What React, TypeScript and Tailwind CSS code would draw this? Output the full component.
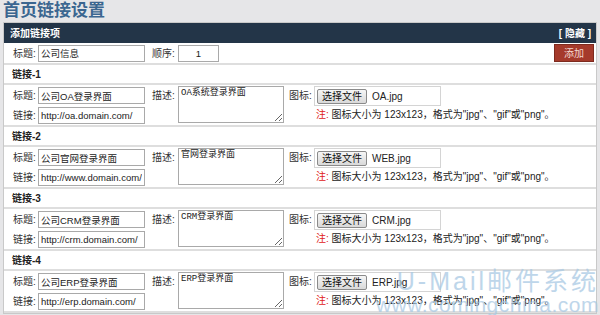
import React from 'react';

const links = [
    {n: 1, title: '公司OA登录界面', url: 'http://oa.domain.com/', desc: 'OA系统登录界面', file: 'OA.jpg'},
    {n: 2, title: '公司官网登录界面', url: 'http://www.domain.com/', desc: '官网登录界面', file: 'WEB.jpg'},
    {n: 3, title: '公司CRM登录界面', url: 'http://crm.domain.com/', desc: 'CRM登录界面', file: 'CRM.jpg'},
    {n: 4, title: '公司ERP登录界面', url: 'http://erp.domain.com/', desc: 'ERP登录界面', file: 'ERP.jpg'},
];

const cjk = "font-['Liberation_Sans','Noto_Sans_CJK_SC',sans-serif]";
const inputCls = 'h-[17px] border border-[#a9a9a9] bg-white px-[2px] text-[9.5px] text-[#222] outline-none';

function Field({label, value, width}: {label: string; value: string; width: string}) {
    return (
        <div className="flex items-center">
            <span className="w-[25px] text-[10px] text-[#333]">{label}</span>
            <input readOnly defaultValue={value} className={`${inputCls} ${width}`} />
        </div>
    );
}

function LinkBlock({link}: {link: typeof links[number]}) {
    return (
        <div>
            <div className="h-[20px] flex items-center pl-[8px] text-[10px] font-bold text-[#222] border-b-2 border-[#dedede]">
                链接-{link.n}
            </div>
            <div className="h-[42px] flex pl-[9px] border-b-2 border-[#dedede]">
                <div className="flex flex-col gap-[3px] pt-[2px] w-[139px]">
                    <Field label="标题:" value={link.title} width="w-[107px]" />
                    <Field label="链接:" value={link.url} width="w-[107px]" />
                </div>
                <div className="flex pt-[1px] w-[137px]">
                    <span className="w-[26px] pt-[2px] text-[10px] text-[#333]">描述:</span>
                    <textarea
                        readOnly
                        defaultValue={link.desc}
                        className="w-[106px] h-[37px] border border-[#a9a9a9] px-[2px] py-0 text-[9px] leading-[12px] text-[#222] outline-none font-['Liberation_Mono','Noto_Sans_CJK_SC',monospace]"
                    />
                </div>
                <div className="flex pt-[1px]">
                    <span className="w-[25px] pt-[2px] text-[10px] text-[#333]">图标:</span>
                    <div className="flex flex-col">
                        <div className="w-[127px] h-[20px] border border-[#d4d4d4] flex items-center pl-[2px] gap-[5px]">
                            <span className="h-[15px] w-[50px] flex items-center justify-center rounded-[2px] border border-[#8a8a8a] bg-gradient-to-b from-[#f6f6f6] to-[#d9d9d9] text-[10px] text-[#111]">
                                选择文件
                            </span>
                            <span className="text-[10px] text-[#222]">{link.file}</span>
                        </div>
                        <div className="pt-[2px] pl-[2px] text-[10px] text-[#222] leading-[14px]">
                            <span className="text-[#e02020]">注:</span> 图标大小为 123x123，格式为"jpg"、"gif"或"png"。
                        </div>
                    </div>
                </div>
            </div>
        </div>
    );
}

export default function App() {
    return (
        <div className={`relative w-[600px] h-[315px] overflow-hidden bg-[#e6e6e8] ${cjk}`}>
            <div className="h-[22px] pl-[3px] text-[17px] leading-[22px] font-bold text-[#3b6690]">
                首页链接设置
            </div>
            <div className="mx-[3px] border border-[#c9c9c9] bg-white">
                <div className="h-[20px] bg-[#233548] flex items-center justify-between pl-[6px] pr-[5px] text-[10px] font-bold text-white">
                    <span>添加链接项</span>
                    <span>[ 隐藏 ]</span>
                </div>
                <div className="h-[22px] flex items-center pl-[9px] pr-[2px] border-b-2 border-[#dedede]">
                    <div className="w-[139px]">
                        <Field label="标题:" value="公司信息" width="w-[107px]" />
                    </div>
                    <span className="w-[26px] text-[10px] text-[#333]">顺序:</span>
                    <input readOnly defaultValue="1" className={`${inputCls} w-[41px] text-center`} />
                    <button className="ml-auto h-[18px] w-[40px] bg-[#a53a2b] border border-[#7d2a1e] text-[10px] text-[#f3d7d0]">
                        添加
                    </button>
                </div>
                {links.map((link) => (
                    <LinkBlock key={link.n} link={link} />
                ))}
            </div>
            <div className="absolute right-[1px] top-[267px] flex flex-col items-end pointer-events-none text-[#a9c9e4] opacity-75 font-['Liberation_Sans','Noto_Sans_CJK_SC',sans-serif]">
                <span className="text-[25px] leading-[28px] tracking-[3px]">U-Mail邮件系统</span>
                <span className="text-[21px] leading-[20px] tracking-[0.5px]">www.comingchina.com</span>
            </div>
        </div>
    );
}
